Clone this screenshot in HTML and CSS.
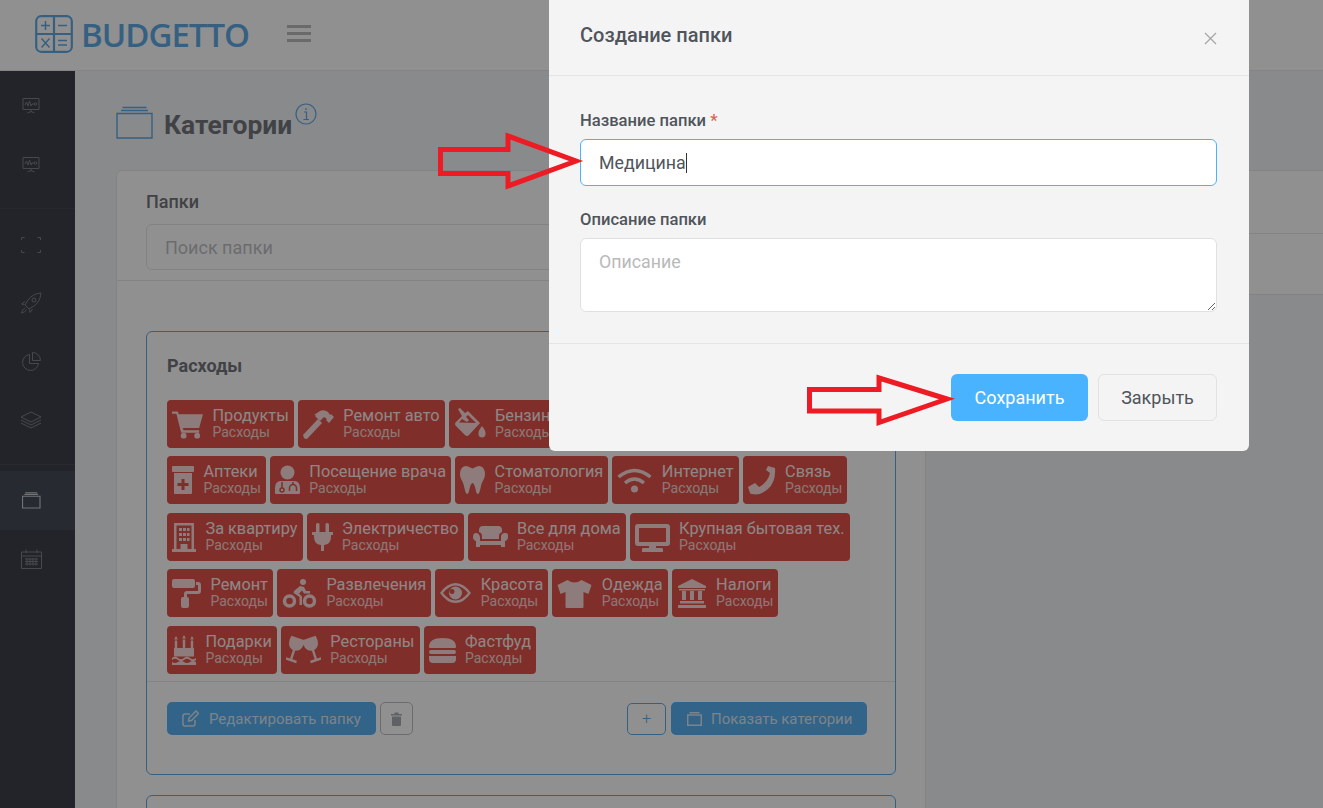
FILE: index.html
```html
<!DOCTYPE html>
<html lang="ru">
  <head>
    <meta charset="UTF-8" />
    <meta name="viewport" content="width=device-width, initial-scale=1.0" />
    <title>Budgetto - Категории</title>
    <link rel="stylesheet" href="styles.css">
  </head>
  <body>
    <header class="topbar">
      <a class="logo">
        <svg class="logo-icon" width="38" height="38" viewBox="0 0 38 38">
          <rect class="logo-frame" x="1.2" y="1.2" width="35.6" height="35.6" rx="5"/>
          <path class="logo-frame" d="M19 1v36M1 19h36"/>
          <path d="M6 10.500h9M10.500 6v9M23 10.500h9M23 25.500h9M23 30h9M6.500 23.500l8 9M14.500 23.500l-8 9"/>
        </svg>
        <span class="logo-text">BUDGETTO</span>
      </a>
      <div class="burger"><span></span><span></span><span></span></div>
    </header>

    <div class="layout">
      <nav class="sidebar">
        <div class="side-group">
          <a class="side-link"><svg width="20" height="20" viewBox="0 0 20 20"><path d="M2 2.500h16v11H2zM10 13.500v2M6.500 17l3.500-1.500 3.500 1.500M4 9l1.500-3 1.500 4 1.500-5 1.500 5 1-2h2"/><circle cx="14.500" cy="8" r="1.300"/></svg></a>
          <a class="side-link"><svg width="20" height="20" viewBox="0 0 20 20"><path d="M2 2.500h16v11H2zM10 13.500v2M6.500 17l3.500-1.500 3.500 1.500M4 9l1.500-3 1.500 4 1.500-5 1.500 5 1-2h2"/><circle cx="14.500" cy="8" r="1.300"/></svg></a>
        </div>
        <div class="side-group">
          <a class="side-link"><svg width="20" height="20" viewBox="0 0 20 20"><path d="M.5 5V2.500h3M16.500 2.500h3V5M19.500 15v2.500h-3M3.500 17.500h-3V15"/></svg></a>
          <a class="side-link"><svg width="22" height="22" viewBox="0 0 22 22"><path d="M21 1c-6 .5-10 3-13 7l-3 5 4 4 5-3c4-3 6.500-7 7-13zM5 9.500L1.500 12l3 .5M12.500 17L10 20.500l-.5-3M5 16c-2 1-3 3-3.500 5 2-.5 4-1.500 5-3.500"/><circle cx="14" cy="8" r="2"/></svg></a>
          <a class="side-link"><svg width="20" height="20" viewBox="0 0 20 20"><path d="M8.500 2.500a8 8 0 1 0 9 9h-9zM11.500.5v8h8a8 8 0 0 0-8-8z"/></svg></a>
          <a class="side-link"><svg width="22" height="20" viewBox="0 0 22 20"><path d="M11 2l10 5-10 5L1 7zM1 10l10 5 10-5M1 13l10 5 10-5"/></svg></a>
        </div>
        <div class="side-group">
          <a class="side-link side-link-active"><svg width="19" height="17" viewBox="0 0 20 18"><path d="M.5 4.500h18.500v12.500H.5zM2.500 2.500h14.500M3.500.8h12.500"/></svg></a>
          <a class="side-link"><svg width="21" height="20" viewBox="0 0 21 20"><path d="M.5 3h20v16.500H.5zM.5 7h20M5 .5V4M16 .5V4M4 10h13M4 12.500h13M4 15h13M6 9v7.500M9 9v7.500M12 9v7.500M15 9v7.500"/></svg></a>
        </div>
      </nav>

      <main class="content">
        <div class="page-title">
          <svg class="title-icon" width="37" height="33" viewBox="0 0 37 33"><path d="M1 7.500h35V32H1zM5 4.500h27M6.500 1.500h24"/></svg>
          <h1>Категории</h1>
          <svg class="info-icon" width="22" height="22" viewBox="0 0 22 22"><circle cx="11" cy="11" r="10"/><path d="M9 9h2.500v7M8.500 16.500h5.500M11 5v2"/></svg>
        </div>

        <div class="columns">
          <section class="folders-card">
            <div class="search-block">
              <label class="search-label">Папки</label>
              <div class="search-input">Поиск папки</div>
            </div>

            <div class="folder-list">
              <div class="folder-box">
                <div class="folder-body">
                  <h3>Расходы</h3>
                  <div class="chip-rows">
                    <div class="chip-row">
                      <a class="chip">
                        <svg width="31" height="32" viewBox="0 0 32 32"><path d="M0 3h6l1 3h25l-4 14H11l1 2.500h16V25H9.500L4.500 5.500H0z"/><circle cx="12" cy="28" r="3"/><circle cx="26" cy="28" r="3"/></svg>
                        <span class="chip-text"><b>Продукты</b><i>Расходы</i></span>
                      </a>
                      <a class="chip">
                        <svg width="31" height="32" viewBox="0 0 31 32"><path d="M0 27l15-16 4 4L4 31Q2 31 1 30z"/><path d="M11 7l6-4q4-2 8 1l2 3 1-1 3 3-5 6-3-3 1-1-3-2-4 4-5-5 1-1z"/></svg>
                        <span class="chip-text"><b>Ремонт авто</b><i>Расходы</i></span>
                      </a>
                      <a class="chip">
                        <svg width="32" height="32" viewBox="0 0 32 32"><path fill-rule="evenodd" d="M4 1l2-1 5 5 3-2 12 12-11 12q-2 2-4 0L2 18q-2-2 0-4l6-6zM8 11l-3 3.500 17 .5-8-8-2 2 3 3-2 2z"/><path d="M28 18q4 5 3.500 8a3.500 3.500 0 0 1-7 0q-.5-3 3.500-8z"/></svg>
                        <span class="chip-text"><b>Бензин</b><i>Расходы</i></span>
                      </a>
                    </div>
                    <div class="chip-row">
                      <a class="chip">
                        <svg width="22" height="32" viewBox="0 0 22 32"><rect y="2" width="22" height="6" rx="1"/><path fill-rule="evenodd" d="M2 9h18v20q0 1-1 1H3q-1 0-1-1zM9.500 15v4h-4v3h4v4h3v-4h4v-3h-4v-4z"/></svg>
                        <span class="chip-text"><b>Аптеки</b><i>Расходы</i></span>
                      </a>
                      <a class="chip">
                        <svg width="25" height="32" viewBox="0 0 25 32"><circle cx="12.500" cy="8.500" r="7"/><path d="M5 17h15q5 1 5 7v5q0 1-1 1H1q-1 0-1-1v-5q0-6 5-7z"/><path class="chip-cut" d="M7 18v6M18 18v3M14.500 27v-3a3.500 3.500 0 0 1 7 0v3"/><circle class="chip-cut" cx="7" cy="26" r="2"/></svg>
                        <span class="chip-text"><b>Посещение врача</b><i>Расходы</i></span>
                      </a>
                      <a class="chip">
                        <svg width="25" height="32" viewBox="0 0 25 32"><path d="M6 2c3 0 5 2.500 6.500 2.500S16 2 19 2c4 0 6 4 6 8 0 5-3 7-4 12-1 5-2 8-3 8-2 0-2-4-3-7-.7-2.500-2-4-2.500-4s-1.800 1.500-2.500 4c-1 3-1 7-3 7-1 0-2-3-3-8C3 17 0 15 0 10c0-4 2-8 6-8z"/></svg>
                        <span class="chip-text"><b>Стоматология</b><i>Расходы</i></span>
                      </a>
                      <a class="chip">
                        <svg width="35" height="32" viewBox="0 0 35 32"><path class="chip-stroke" d="M1.500 13q16-13 32 0M8 19q9.500-8 19 0"/><circle cx="17.500" cy="25" r="3.500"/></svg>
                        <span class="chip-text"><b>Интернет</b><i>Расходы</i></span>
                      </a>
                      <a class="chip">
                        <svg width="28" height="32" viewBox="0 0 28 32"><path d="M20 2l7 2q1 14-7 21T4 30q-2 0-2-1L0 23l7-4 4 4q9-5 11-14l-4-3z"/></svg>
                        <span class="chip-text"><b>Связь</b><i>Расходы</i></span>
                      </a>
                    </div>
                    <div class="chip-row">
                      <a class="chip">
                        <svg width="24" height="32" viewBox="0 0 24 32"><path fill-rule="evenodd" d="M2 2h20v26h2v3H0v-3h2zM4.500 4.500v23.500h4v-5h7v5h4V4.500zM7 7h3v3H7zM11 7h3v3h-3zM15 7h2.500v3H15zM7 12h3v3H7zM11 12h3v3h-3zM15 12h2.500v3H15zM7 17h3v3H7zM11 17h3v3h-3zM15 17h2.500v3H15z"/></svg>
                        <span class="chip-text"><b>За квартиру</b><i>Расходы</i></span>
                      </a>
                      <a class="chip">
                        <svg width="21" height="32" viewBox="0 0 21 32"><rect x="4" y="2" width="3.500" height="10" rx="1.500"/><rect x="13.500" y="2" width="3.500" height="10" rx="1.500"/><path d="M0 11h21v3h-2v2q0 7-7 8v6H9v-6q-7-1-7-8v-2H0z"/></svg>
                        <span class="chip-text"><b>Электричество</b><i>Расходы</i></span>
                      </a>
                      <a class="chip">
                        <svg width="35" height="32" viewBox="0 0 35 32"><path d="M6 11V9q0-4 4-4h15q4 0 4 4v2q-3 1-3 4v3H9v-3q0-3-3-4z"/><path d="M0 16q0-4 3-4t4 4v4h21v-4q0-4 4-4t3 4q0 3-3 4v6h-4v-2H7v2H3v-6q-3-1-3-4z"/></svg>
                        <span class="chip-text"><b>Все для дома</b><i>Расходы</i></span>
                      </a>
                      <a class="chip">
                        <svg width="35" height="32" viewBox="0 0 35 32"><path fill-rule="evenodd" d="M3 3h29q3 0 3 3v16q0 3-3 3H3q-3 0-3-3V6q0-3 3-3zM4 7v14h27V7z"/><path d="M14 25h7v2h6q1 0 1 1.500V31H7v-2.500Q7 27 8 27h6z"/></svg>
                        <span class="chip-text"><b>Крупная бытовая тех.</b><i>Расходы</i></span>
                      </a>
                    </div>
                    <div class="chip-row">
                      <a class="chip">
                        <svg width="29" height="32" viewBox="0 0 29 32"><rect y="2" width="23" height="9" rx="2"/><path d="M24 5h2q3 0 3 3v6q0 3-3 3H15v3h-3v-3q0-3 3-3h11V8h-2z"/><rect x="9" y="20" width="8" height="11" rx="2"/></svg>
                        <span class="chip-text"><b>Ремонт</b><i>Расходы</i></span>
                      </a>
                      <a class="chip">
                        <svg width="35" height="32" viewBox="0 0 35 32"><circle cx="21" cy="5" r="3"/><path d="M12 14l6-5 4 1 2 4h4v2.500h-6l-2-3-3 3 3 3V28h-2.500v-8l-6-4z"/><circle class="chip-ring" cx="7.500" cy="24" r="5"/><circle class="chip-ring" cx="27.500" cy="24" r="5"/></svg>
                        <span class="chip-text"><b>Развлечения</b><i>Расходы</i></span>
                      </a>
                      <a class="chip">
                        <svg width="31" height="32" viewBox="0 0 31 32"><path fill-rule="evenodd" d="M0 16q7-10 15.500-10T31 16q-7 10-15.500 10T0 16zM3 16q6 7.500 12.500 7.500T28 16Q22 8.500 15.500 8.500T3 16z"/><path fill-rule="evenodd" d="M15.500 9.500a6.500 6.500 0 1 1 0 13 6.500 6.500 0 0 1 0-13zM12 12a2.500 2.500 0 1 0 .1 0z"/></svg>
                        <span class="chip-text"><b>Красота</b><i>Расходы</i></span>
                      </a>
                      <a class="chip">
                        <svg width="35" height="32" viewBox="0 0 34 32"><path d="M10 3q7 5 14 0l10 5-3 9-5-2v15q0 1-1 1H9q-1 0-1-1V15l-5 2-3-9z"/></svg>
                        <span class="chip-text"><b>Одежда</b><i>Расходы</i></span>
                      </a>
                      <a class="chip">
                        <svg width="30" height="32" viewBox="0 0 28 32"><path d="M14 2l14 7v2H0V9zM1 12h26v1.500H1zM4 14h4v9H4zM12 14h4v9h-4zM20 14h4v9h-4zM2 24h24v2.500H2zM0 28h28v3H0z"/></svg>
                        <span class="chip-text"><b>Налоги</b><i>Расходы</i></span>
                      </a>
                    </div>
                    <div class="chip-row">
                      <a class="chip">
                        <svg width="24" height="32" viewBox="0 0 24 32"><path d="M4 2l1.800 3.500H2.200zM12 1l1.800 3.500h-3.600zM20 2l1.800 3.500h-3.600z"/><path d="M2.800 6.500h2.400V14H2.800zM10.800 5.500h2.400V14h-2.400zM18.800 6.500h2.400V14h-2.400zM2 14h20v8.500H2z"/><path d="M0 24q3-2.500 6 0t6 0 6 0 6 0v2q-3 2.500-6 0t-6 0-6 0-6 0zM0 28q3 2 6 0t6 0 6 0 6 0v3H0z"/></svg>
                        <span class="chip-text"><b>Подарки</b><i>Расходы</i></span>
                      </a>
                      <a class="chip">
                        <svg width="35" height="32" viewBox="0 0 35 32">
                          <path transform="translate(12 4) rotate(18)" d="M-7 0H7Q9 11 1.200 13V22H6V24.500H-6V22H-1.200V13Q-9 11-7 0Z"/>
                          <path transform="translate(23 4) rotate(-18)" d="M-7 0H7Q9 11 1.200 13V22H6V24.500H-6V22H-1.200V13Q-9 11-7 0Z"/>
                        </svg>
                        <span class="chip-text"><b>Рестораны</b><i>Расходы</i></span>
                      </a>
                      <a class="chip">
                        <svg width="27" height="32" viewBox="0 0 27 32"><path d="M0 13Q0 4 13.500 4T27 13q0 1-1 1H1q-1 0-1-1zM2 16h23q2 0 2 2t-2 2H2q-2 0-2-2t2-2zM0 22h27v3q0 4-4 4H4q-4 0-4-4z"/></svg>
                        <span class="chip-text"><b>Фастфуд</b><i>Расходы</i></span>
                      </a>
                    </div>
                  </div>
                </div>
                <div class="folder-actions">
                  <a class="btn-blue btn-edit">
                    <svg class="btn-icon" width="17" height="17" viewBox="0 0 17 17"><path d="M13 10v4q0 2-2 2H3q-2 0-2-2V6q0-2 2-2h5"/><path d="M6.500 11l.5-3 7-7 2.500 2.500-7 7z"/></svg>
                    Редактировать папку
                  </a>
                  <a class="btn-trash">
                    <svg width="11" height="14" viewBox="0 0 11 14"><path d="M0 2h3.500V.5h4V2H11v1.500H0zM1 4.500h9V13q0 1-1 1H2q-1 0-1-1z"/></svg>
                  </a>
                  <a class="btn-plus">+</a>
                  <a class="btn-blue btn-show">
                    <svg class="btn-icon" width="15" height="14" viewBox="0 0 15 14"><path d="M.7 3h13.600v10.300H.7zM2.500.7h10"/></svg>
                    Показать категории
                  </a>
                </div>
              </div>
              <div class="folder-box"></div>
            </div>
          </section>

          <aside class="side-card">
            <div class="side-card-head"></div>
            <div class="side-card-body"></div>
          </aside>
        </div>
      </main>
    </div>

    <div class="backdrop"></div>

    <div class="modal">
      <div class="modal-head">
        <h2>Создание папки</h2>
        <svg class="modal-close" width="13" height="13" viewBox="0 0 13 13"><path d="M1 1l11 11M12 1L1 12"/></svg>
      </div>
      <div class="modal-body">
        <label class="field-label">Название папки <span class="required">*</span></label>
        <div class="field field-focus"><span class="caret">Медицина</span></div>
        <label class="field-label">Описание папки</label>
        <textarea class="field field-area" placeholder="Описание"></textarea>
      </div>
      <div class="modal-foot">
        <a class="btn-save">Сохранить</a>
        <a class="btn-close">Закрыть</a>
      </div>
    </div>

    <svg class="arrows" width="1323" height="808" viewBox="0 0 1323 808">
      <path d="M440.500 149.500H508V136l68 25-68 25v-12.500H440.500z"/>
      <path d="M809.500 389.500H879V378l68 21-68 23.500V411H809.500z"/>
    </svg>
  </body>
</html>
```

FILE: styles.css
```css
* {
  box-sizing: border-box;
}
html, body {
  height: 100%;
}
body {
  margin: 0;
  overflow: hidden;
  position: relative;
  font-family: Roboto, "Liberation Sans", sans-serif;
  background-color: #f1f2f6;
  color: #5c6068;
}
a {
  text-decoration: none;
}

/* top bar */
.topbar {
  display: flex;
  align-items: center;
  height: 71px;
  padding-left: 35px;
  background: #fff;
  border-bottom: 1px solid #e6e6ea;
}
.logo {
  display: flex;
  align-items: center;
  gap: 8px;
  width: 252px;
  margin-bottom: 2px;
}
.logo-icon {
  fill: none;
  stroke: #4a9fe0;
  stroke-width: 1.500;
}
.logo-icon .logo-frame {
  stroke-width: 2.200;
}
.logo-text {
  font-family: "Open Sans", sans-serif;
  font-size: 33px;
  font-weight: 600;
  letter-spacing: -1px;
  color: #4a9fe0;
}
.burger {
  display: flex;
  flex-direction: column;
  gap: 4px;
  width: 24px;
  margin-bottom: 4px;
}
.burger span {
  height: 3px;
  background: #b2b2b4;
}

/* sidebar */
.layout {
  display: flex;
  height: 737px;
}
.sidebar {
  flex: none;
  width: 75px;
  padding-top: 6px;
  background: #232733;
}
.side-group {
  padding-bottom: 14px;
  margin-bottom: 6.500px;
  border-bottom: 1px solid #2d313e;
}
.side-group:last-child {
  border-bottom: 0;
}
.side-link {
  display: flex;
  align-items: center;
  justify-content: center;
  height: 58.500px;
  padding-right: 13px;
}
.side-link svg {
  fill: none;
  stroke: #6a6e78;
  stroke-width: 1;
}
.side-link-active {
  background: #2e3340;
}
.side-link-active svg {
  stroke: #c0c3ca;
  stroke-width: 1.200;
}

/* content */
.content {
  flex: 1;
  min-width: 0;
  padding-left: 41px;
}
.page-title {
  display: flex;
  align-items: flex-start;
  height: 99px;
  padding-top: 32px;
}
.title-icon {
  margin: 3px 11px 0 0;
  fill: none;
  stroke: #4a9fe0;
  stroke-width: 1.400;
}
.page-title h1 {
  margin: 4px 3px 0 0;
  font-size: 26.400px;
  line-height: 36px;
  font-weight: 700;
  color: #5f6269;
}
.info-icon {
  fill: none;
  stroke: #4a9fe0;
  stroke-width: 1.200;
}
.columns {
  display: flex;
  align-items: flex-start;
}
.folders-card {
  flex: none;
  width: 810px;
  background: #fff;
  border: 1px solid #e4e5ea;
  border-radius: 6px 0 0 0;
}
.search-block {
  padding: 20px 29px 10px;
  border-bottom: 1px solid #e4e5ea;
}
.search-label {
  display: block;
  margin-bottom: 12px;
  font-size: 18px;
  line-height: 21px;
  font-weight: 500;
  color: #5f6269;
}
.search-input {
  height: 46px;
  padding-left: 18px;
  font-size: 18px;
  line-height: 46px;
  color: #b5b7bc;
  border: 1px solid #e1e2e6;
  border-radius: 6px;
}
.folder-list {
  padding: 50px 29px 0;
}
.folder-box {
  height: 444px;
  margin-bottom: 20px;
  border: 1px solid #4a9fe0;
  border-radius: 6px;
}
.folder-body {
  height: 350px;
  padding: 23px 20px 0;
  border-bottom: 1px solid #e4e5ea;
}
.folder-body h3 {
  margin: 0 0 24px;
  font-size: 18px;
  line-height: 21px;
  font-weight: 700;
  color: #5f6269;
}

/* category chips */
.chip-rows {
  display: flex;
  flex-direction: column;
  gap: 8.400px;
}
.chip-row {
  display: flex;
  gap: 4px;
}
.chip {
  display: flex;
  align-items: center;
  gap: 9.500px;
  height: 48px;
  padding: 0 5px;
  background: #df3a30;
  border-radius: 4px;
  color: #fff;
}
.chip svg {
  flex: none;
  fill: #fff;
  opacity: .8;
}
.chip-cut {
  fill: none;
  stroke: #df3a30;
  stroke-width: 1.500;
}
.chip-stroke {
  fill: none;
  stroke: #fff;
  stroke-width: 3.500;
}
.chip-ring {
  fill: none;
  stroke: #fff;
  stroke-width: 3.500;
}
.chip-text {
  display: flex;
  flex-direction: column;
  white-space: nowrap;
}
.chip-text b {
  font-size: 16.300px;
  line-height: 16px;
  font-weight: 400;
  opacity: .9;
}
.chip-text i {
  font-size: 14px;
  line-height: 16px;
  font-style: normal;
  opacity: .75;
}

/* folder buttons */
.folder-actions {
  display: flex;
  align-items: center;
  padding: 20px 28px 0 20px;
}
.btn-blue {
  display: flex;
  align-items: center;
  height: 33px;
  font-size: 15px;
  background: #42a5ee;
  border-radius: 5px;
  color: #d9e5ee;
}
.btn-icon {
  fill: none;
  stroke: #d9e5ee;
  stroke-width: 1.500;
}
.btn-edit {
  gap: 10px;
  width: 209px;
  padding-left: 15px;
}
.btn-trash {
  display: flex;
  align-items: center;
  justify-content: center;
  width: 33px;
  height: 33px;
  margin-left: 4px;
  margin-right: auto;
  border: 1px solid #b4b6bd;
  border-radius: 5px;
}
.btn-trash svg {
  fill: #9ca1ab;
}
.btn-plus {
  display: flex;
  align-items: center;
  justify-content: center;
  width: 39px;
  height: 32px;
  margin-right: 5px;
  font-size: 16px;
  font-weight: 300;
  color: #4a9fe0;
  border: 1px solid #4a9fe0;
  border-radius: 5px;
}
.btn-show {
  gap: 9px;
  width: 196px;
  padding-left: 16px;
}
.side-card {
  flex: 1;
  height: 125px;
  background: #fff;
  border-top: 1px solid #e4e5ea;
  border-bottom: 1px solid #e4e5ea;
}
.side-card-head {
  height: 63px;
  border-bottom: 1px solid #e4e5ea;
}

/* modal */
.backdrop {
  position: absolute;
  inset: 0;
  background: rgba(34, 34, 34, .5);
}
.modal {
  position: absolute;
  top: 0;
  left: 549px;
  width: 700px;
  height: 451px;
  background: #f4f4f4;
  border-radius: 0 0 6px 6px;
}
.modal-head {
  display: flex;
  justify-content: space-between;
  height: 76px;
  padding: 23px 32px 0 31px;
  border-bottom: 1px solid #e4e4e4;
}
.modal-head h2 {
  margin: 0;
  font-size: 20px;
  line-height: 24px;
  font-weight: 500;
  color: #50555c;
}
.modal-close {
  margin-top: 9px;
  fill: none;
  stroke: #a6a6a6;
  stroke-width: 1.300;
}
.modal-body {
  display: flex;
  flex-direction: column;
  height: 268px;
  padding: 35px 32px 0 31px;
  border-bottom: 1px solid #e4e4e4;
}
.field-label {
  margin-bottom: 8px;
  font-size: 16.600px;
  line-height: 20px;
  font-weight: 500;
  color: #50555c;
}
.required {
  color: #e0604f;
}
.field {
  display: block;
  width: 100%;
  height: 47px;
  margin-bottom: 24px;
  padding: 0 18px;
  font-family: inherit;
  font-size: 17.800px;
  line-height: 45px;
  color: #50555c;
  background: #fff;
  border: 1px solid #e0e0e0;
  border-radius: 6px;
  outline: none;
}
.field-focus {
  border-color: #4ab3ff;
}
.caret {
  display: inline-block;
  line-height: 20px;
  border-right: 1px solid #333;
}
.field-area {
  height: 74px;
  margin-bottom: 0;
  padding-top: 12px;
  line-height: 22px;
}
.field-area::placeholder {
  color: #b9b9b9;
}
.modal-foot {
  display: flex;
  justify-content: flex-end;
  gap: 10px;
  padding: 30px 32px 0 0;
}
.btn-save,
.btn-close {
  height: 47px;
  font-size: 18px;
  line-height: 47px;
  text-align: center;
  border-radius: 6px;
}
.btn-save {
  width: 137px;
  background: #4ab3ff;
  color: #fff;
}
.btn-close {
  width: 119px;
  line-height: 45px;
  color: #50555c;
  border: 1px solid #e2e2e2;
}

/* red arrows drawn over the screenshot */
.arrows {
  position: absolute;
  top: 0;
  left: 0;
  pointer-events: none;
  fill: none;
  stroke: #ed1c24;
  stroke-width: 5;
}
```
